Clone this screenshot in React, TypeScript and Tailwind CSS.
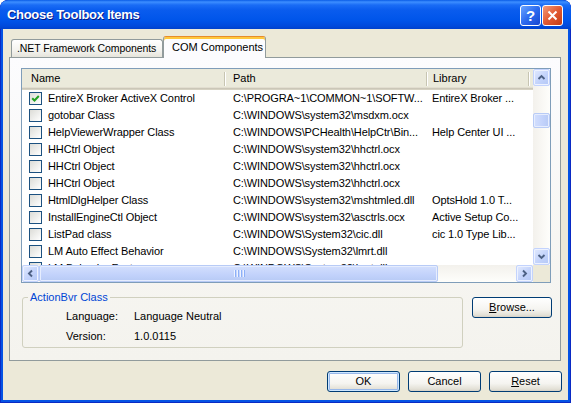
import React from "react";

type Row = { name: string; path: string; lib?: string; checked?: boolean };

const rows: Row[] = [
  { name: "EntireX Broker ActiveX Control", path: "C:\\PROGRA~1\\COMMON~1\\SOFTW...", lib: "EntireX Broker ...", checked: true },
  { name: "gotobar Class", path: "C:\\WINDOWS\\system32\\msdxm.ocx" },
  { name: "HelpViewerWrapper Class", path: "C:\\WINDOWS\\PCHealth\\HelpCtr\\Bin...", lib: "Help Center UI ..." },
  { name: "HHCtrl Object", path: "C:\\WINDOWS\\system32\\hhctrl.ocx" },
  { name: "HHCtrl Object", path: "C:\\WINDOWS\\system32\\hhctrl.ocx" },
  { name: "HHCtrl Object", path: "C:\\WINDOWS\\system32\\hhctrl.ocx" },
  { name: "HtmlDlgHelper Class", path: "C:\\WINDOWS\\system32\\mshtmled.dll", lib: "OptsHold 1.0 T..." },
  { name: "InstallEngineCtl Object", path: "C:\\WINDOWS\\system32\\asctrls.ocx", lib: "Active Setup Co..." },
  { name: "ListPad class", path: "C:\\WINDOWS\\System32\\cic.dll", lib: "cic 1.0 Type Lib..." },
  { name: "LM Auto Effect Behavior", path: "C:\\WINDOWS\\System32\\lmrt.dll" },
  { name: "LM Behavior Factory", path: "C:\\WINDOWS\\System32\\lmrt.dll" },
];

const CheckBox = ({ checked }: { checked?: boolean }) => (
  <span className="w-[13px] h-[13px] shrink-0 border border-[#1C5180] bg-[linear-gradient(135deg,#DCDCD7,#FFFFFF)] flex items-center justify-center">
    {checked && (
      <svg width="9" height="9" viewBox="0 0 9 9">
        <path d="M1.2 4.2 L3.5 6.5 L7.8 2" stroke="#21A121" strokeWidth="2" fill="none" />
      </svg>
    )}
  </span>
);

const arrows: Record<string, string> = {
  up: "M1.5 6 L4.5 3 L7.5 6",
  down: "M1.5 3 L4.5 6 L7.5 3",
  left: "M6 1.5 L3 4.5 L6 7.5",
  right: "M3 1.5 L6 4.5 L3 7.5",
};

const SbButton = ({ dir }: { dir: "up" | "down" | "left" | "right" }) => (
  <div className="w-[17px] h-[17px] shrink-0 rounded-[2px] border border-[#C3D3FD] bg-[linear-gradient(135deg,#E2EAFE,#C3D3FB_55%,#B4C8F6)] shadow-[inset_0_0_0_1px_#EDF2FF] flex items-center justify-center">
    <svg width="9" height="9" viewBox="0 0 9 9">
      <path d={arrows[dir]} stroke="#4D6185" strokeWidth="1.9" fill="none" />
    </svg>
  </div>
);

const Separator = () => <span className="w-px h-[14px] bg-[#C7C5B2] shadow-[1px_0_0_#FFFFFF] shrink-0" />;

const XPButton = ({ children, width, primary }: { children: React.ReactNode; width: string; primary?: boolean }) => (
  <button
    className={`${width} h-[21px] rounded-[3px] border border-[#003C74] bg-[linear-gradient(to_bottom,#FFFFFF,#F5F4F0_60%,#E3E0D6_90%,#D6D0C5)] text-[11px] text-black flex items-center justify-center ${
      primary ? "shadow-[inset_0_0_0_1px_#CEE7FF,inset_0_0_0_2px_#98B8EA]" : ""
    }`}
  >
    {children}
  </button>
);

export default function App() {
  return (
    <div className="w-[571px] h-[403px] flex flex-col bg-[#0553E4] rounded-t-[8px] overflow-hidden font-['Liberation_Sans',Arial,sans-serif] text-[11px] text-black shadow-[inset_0_0_0_1px_#0A2AC4]">
      {/* Title bar */}
      <div className="h-[29px] shrink-0 flex items-center pl-[7px] pr-[8px] rounded-t-[8px] bg-[linear-gradient(to_bottom,#0A5CE6_0px,#3D8EFF_2px,#1A6CF5_5px,#0A5CEE_10px,#0055EA_20px,#004ADC_26px,#0041CC_29px)]">
        <span className="flex-1 text-white font-bold text-[13px] tracking-[-0.3px] [text-shadow:1px_1px_0_#0A1883]">
          Choose Toolbox Items
        </span>
        <div className="flex gap-[1px] mt-[2px]">
          <div className="w-[21px] h-[21px] rounded-[3px] border border-white bg-[linear-gradient(135deg,#6AA5FF,#2D6BEF_50%,#1645D0)] flex items-center justify-center text-white font-bold text-[15px] leading-none">
            ?
          </div>
          <div className="w-[21px] h-[21px] rounded-[3px] border border-white bg-[linear-gradient(135deg,#F29B7A,#E25A33_50%,#C33C14)] flex items-center justify-center">
            <svg width="11" height="11" viewBox="0 0 11 11">
              <path d="M1.5 1.5 L9.5 9.5 M9.5 1.5 L1.5 9.5" stroke="#FFFFFF" strokeWidth="2" />
            </svg>
          </div>
        </div>
      </div>

      {/* Client */}
      <div className="flex-1 flex px-[3px] pb-[3px]">
        <div className="flex-1 flex flex-col bg-[#ECE9D8] pt-[7px]">
          {/* Tabs */}
          <div className="h-[21px] flex items-end pl-[8px]">
            <div className="w-[152px] h-[18px] border border-b-0 border-[#919B9C] rounded-t-[3px] bg-[linear-gradient(to_bottom,#FFFFFF,#F4F3EF_60%,#E6E4DB)] pl-[5px] flex items-center whitespace-nowrap overflow-hidden text-[10.5px] tracking-[-0.1px]">
              .NET Framework Components
            </div>
            <div className="relative z-10 -mb-px w-[103px] h-[22px] border border-b-0 border-[#919B9C] border-t-[#E68B2C] rounded-t-[3px] bg-[#FCFCFE] shadow-[inset_0_2px_0_#FFC83C] pl-[8px] flex items-center whitespace-nowrap">
              COM Components
            </div>
          </div>

          {/* Tab panel */}
          <div className="h-[304px] ml-[6px] mr-[7px] border border-[#919B9C] bg-[linear-gradient(to_bottom,#FCFCFE,#F6F5F1_70%,#F4F3EE)] pt-[10px] pl-[11px] flex flex-col">
            {/* List view */}
            <div className="w-[530px] h-[215px] border border-[#7F9DB9] bg-white flex flex-col">
              <div className="h-[196px] flex">
                <div className="w-[511px] overflow-hidden">
                  <div className="h-[21px] flex items-center bg-[#EBEADB] shadow-[inset_0_-1px_0_#D6D2C2,inset_0_-2px_0_#CBC7B8,inset_0_-3px_0_#E2DED0] pb-[2px]">
                    <div className="w-[202px] pl-[9px]">Name</div>
                    <div className="w-[202px] flex items-center">
                      <Separator />
                      <span className="ml-[8px]">Path</span>
                    </div>
                    <div className="w-[102px] flex items-center">
                      <Separator />
                      <span className="ml-[6px]">Library</span>
                    </div>
                    <div className="flex-1 flex items-center">
                      <Separator />
                    </div>
                  </div>
                  {rows.map((r, i) => (
                    <div key={i} className="h-[17px] flex items-center whitespace-nowrap tracking-[-0.1px]">
                      <div className="w-[202px] shrink-0 pl-[7px] flex items-center gap-[6px] overflow-hidden">
                        <CheckBox checked={r.checked} />
                        <span>{r.name}</span>
                      </div>
                      <div className="w-[202px] shrink-0 pl-[9px] overflow-hidden">{r.path}</div>
                      <div className="w-[102px] shrink-0 pl-[6px] overflow-hidden">{r.lib}</div>
                    </div>
                  ))}
                </div>
                {/* Vertical scrollbar */}
                <div className="w-[17px] flex flex-col bg-[linear-gradient(to_right,#F3F1EC,#FEFEFB)]">
                  <SbButton dir="up" />
                  <div className="mt-[27px] h-[15px] rounded-[2px] border border-[#B8CBF6] bg-[linear-gradient(to_right,#D3DFFD,#C2D2FB_60%,#B7CAF5)] shadow-[inset_0_0_0_1px_#E6EDFE]" />
                  <div className="flex-1" />
                  <SbButton dir="down" />
                </div>
              </div>
              {/* Horizontal scrollbar */}
              <div className="h-[17px] flex">
                <div className="w-[511px] flex bg-[linear-gradient(to_bottom,#F3F1EC,#FEFEFB)]">
                  <SbButton dir="left" />
                  <div className="w-[399px] rounded-[2px] border border-[#B8CBF6] bg-[linear-gradient(to_bottom,#D3DFFD,#C2D2FB_60%,#B7CAF5)] shadow-[inset_0_0_0_1px_#E6EDFE] flex items-center justify-center gap-px">
                    <span className="w-px h-[7px] bg-[#EEF3FF] shadow-[1px_0_0_#8CB0F8]" />
                    <span className="w-px h-[7px] bg-[#EEF3FF] shadow-[1px_0_0_#8CB0F8] ml-px" />
                    <span className="w-px h-[7px] bg-[#EEF3FF] shadow-[1px_0_0_#8CB0F8] ml-px" />
                    <span className="w-px h-[7px] bg-[#EEF3FF] shadow-[1px_0_0_#8CB0F8] ml-px" />
                  </div>
                  <div className="flex-1" />
                  <SbButton dir="right" />
                </div>
                <div className="flex-1 bg-[#ECE9D8]" />
              </div>
            </div>

            {/* Info group and Browse */}
            <div className="flex items-start mt-[8px]">
              <fieldset className="ml-[1px] w-[441px] border border-[#D0D0BF] rounded-[3px] pt-[2px] pb-[1px]">
                <legend className="ml-[5px] px-[2px] text-[#0046D5] leading-[13px]">ActionBvr Class</legend>
                <div className="pl-[43px] leading-[20px]">
                  <div className="flex">
                    <span className="w-[68px]">Language:</span>
                    <span>Language Neutral</span>
                  </div>
                  <div className="flex">
                    <span className="w-[68px]">Version:</span>
                    <span>1.0.0115</span>
                  </div>
                </div>
              </fieldset>
              <div className="ml-[9px] mt-[6px]">
                <XPButton width="w-[80px]">
                  <span>
                    <span className="underline">B</span>rowse...
                  </span>
                </XPButton>
              </div>
            </div>
          </div>

          {/* Dialog buttons */}
          <div className="flex justify-end gap-[8px] pr-[6px] mt-[10px]">
            <XPButton width="w-[73px]" primary>
              OK
            </XPButton>
            <XPButton width="w-[73px]">Cancel</XPButton>
            <XPButton width="w-[73px]">
              <span>
                <span className="underline">R</span>eset
              </span>
            </XPButton>
          </div>
        </div>
      </div>
    </div>
  );
}
